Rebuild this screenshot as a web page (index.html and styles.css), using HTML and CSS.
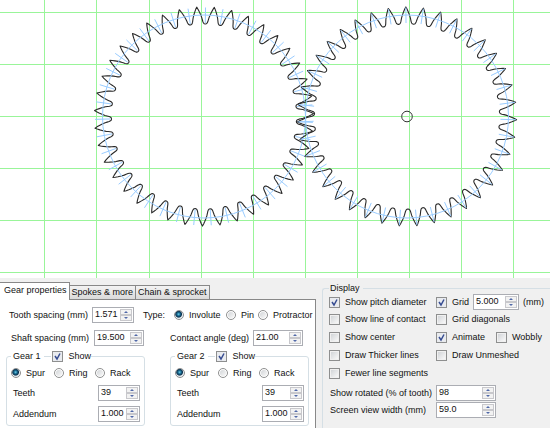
FILE: index.html
```html
<!DOCTYPE html>
<html lang="en">
<head>
<meta charset="utf-8">
<title>Gear properties</title>
<link rel="stylesheet" href="styles.css">
</head>
<body>
<svg class="canvas" id="canvas" viewBox="0 0 550 278" role="img" aria-label="Two meshing gears">
  <path class="grid" d="M44.500 0V278M96.500 0V278M149.500 0V278M201.500 0V278M253.500 0V278M305.500 0V278M357.500 0V278M409.500 0V278M461.500 0V278M513.500 0V278M0 12.500H550M0 64.500H550M0 116.500H550M0 168.500H550M0 220.500H550M0 272.500H550"/>
  <g id="gears"></g>
  <circle class="hub" cx="407" cy="116.500" r="5.300"/>
</svg>

<main class="panels">
  <section class="left">
    <div class="tabs" role="tablist">
      <button class="tab active" role="tab" aria-selected="true">Gear properties</button>
      <button class="tab" role="tab">Spokes &amp; more</button>
      <button class="tab" role="tab">Chain &amp; sprocket</button>
    </div>
    <div class="page" role="tabpanel">
      <div class="row type-row">
        <label for="tooth">Tooth spacing (mm)</label>
        <div class="spin w42"><input id="tooth" type="text" value="1.571"><span class="arrows"><button aria-label="Increase"></button><button aria-label="Decrease"></button></span></div>
        <span>Type:</span>
        <label class="opt"><input type="radio" name="type" checked>Involute</label>
        <label class="opt"><input type="radio" name="type">Pin</label>
        <label class="opt"><input type="radio" name="type">Protractor</label>
      </div>
      <div class="row shaft-row">
        <label for="shaft">Shaft spacing (mm)</label>
        <div class="spin"><input id="shaft" type="text" value="19.500"><span class="arrows"><button aria-label="Increase"></button><button aria-label="Decrease"></button></span></div>
        <label for="angle">Contact angle (deg)</label>
        <div class="spin"><input id="angle" type="text" value="21.00"><span class="arrows"><button aria-label="Increase"></button><button aria-label="Decrease"></button></span></div>
      </div>
      <div class="gear-groups">
        <fieldset class="group gear">
          <legend><span>Gear 1</span><i class="rule"></i><label class="opt"><input type="checkbox" checked>Show</label></legend>
          <div class="kinds">
            <label class="opt"><input type="radio" name="kind1" checked>Spur</label>
            <label class="opt"><input type="radio" name="kind1">Ring</label>
            <label class="opt"><input type="radio" name="kind1">Rack</label>
          </div>
          <div class="field"><label for="teeth1">Teeth</label><div class="spin w42"><input id="teeth1" type="text" value="39"><span class="arrows"><button aria-label="Increase"></button><button aria-label="Decrease"></button></span></div></div>
          <div class="field"><label for="add1">Addendum</label><div class="spin w42"><input id="add1" type="text" value="1.000"><span class="arrows"><button aria-label="Increase"></button><button aria-label="Decrease"></button></span></div></div>
        </fieldset>
        <fieldset class="group gear">
          <legend><span>Gear 2</span><i class="rule"></i><label class="opt"><input type="checkbox" checked>Show</label></legend>
          <div class="kinds">
            <label class="opt"><input type="radio" name="kind2" checked>Spur</label>
            <label class="opt"><input type="radio" name="kind2">Ring</label>
            <label class="opt"><input type="radio" name="kind2">Rack</label>
          </div>
          <div class="field"><label for="teeth2">Teeth</label><div class="spin w42"><input id="teeth2" type="text" value="39"><span class="arrows"><button aria-label="Increase"></button><button aria-label="Decrease"></button></span></div></div>
          <div class="field"><label for="add2">Addendum</label><div class="spin w42"><input id="add2" type="text" value="1.000"><span class="arrows"><button aria-label="Increase"></button><button aria-label="Decrease"></button></span></div></div>
        </fieldset>
      </div>
    </div>
  </section>

  <fieldset class="group display">
    <legend>Display</legend>
    <div class="checks">
      <label class="opt"><input type="checkbox" checked>Show pitch diameter</label>
      <div class="pair">
        <label class="opt"><input type="checkbox" checked>Grid</label>
        <div class="spin w46"><input type="text" value="5.000" aria-label="Grid size"><span class="arrows"><button aria-label="Increase"></button><button aria-label="Decrease"></button></span></div>
        <span>(mm)</span>
      </div>
      <label class="opt"><input type="checkbox">Show line of contact</label>
      <label class="opt"><input type="checkbox">Grid diagonals</label>
      <label class="opt"><input type="checkbox">Show center</label>
      <div class="pair wide">
        <label class="opt"><input type="checkbox" checked>Animate</label>
        <label class="opt"><input type="checkbox">Wobbly</label>
      </div>
      <label class="opt"><input type="checkbox">Draw Thicker lines</label>
      <label class="opt"><input type="checkbox">Draw Unmeshed</label>
      <label class="opt"><input type="checkbox">Fewer line segments</label>
    </div>
    <div class="values">
      <label for="rotated">Show rotated (% of tooth)</label>
      <div class="spin w60"><input id="rotated" type="text" value="98"><span class="arrows"><button aria-label="Increase"></button><button aria-label="Decrease"></button></span></div>
      <label for="view">Screen view width (mm)</label>
      <div class="spin w60"><input id="view" type="text" value="59.0"><span class="arrows"><button aria-label="Increase"></button><button aria-label="Decrease"></button></span></div>
    </div>
  </fieldset>
</main>
<script src="gears.js"></script>
</body>
</html>
```
FILE: styles.css
```css
* { box-sizing: border-box; }
body {
  margin: 0;
  background: #f0f0f0;
  color: #111;
  font: 9px/12px "Liberation Sans", Arial, sans-serif;
  overflow: hidden;
}
input, button { font: inherit; color: inherit; margin: 0; padding: 0; }
label, span, legend { white-space: nowrap; }

.canvas { display: block; width: 100%; background: #fff; }
.grid { stroke: #99f599; fill: none; }
.pitch, .tick { stroke: #99ccff; fill: none; }
.tooth { stroke: #2a2a2a; stroke-width: 1.1; fill: none; stroke-linejoin: round; }
.hub { stroke: #333; fill: none; }

.panels { display: flex; gap: 6px; padding-top: 4px; }
.left { flex: 0 0 316px; }

.tabs { display: flex; align-items: flex-end; height: 17px; }
.tab {
  height: 14px;
  padding: 0 2px;
  line-height: 13px;
  border: 1px solid #888;
  border-left-width: 0;
  border-bottom: 0;
  background: linear-gradient(#f3f3f3, #dadada);
  white-space: nowrap;
}
.tab.active {
  height: 18px;
  padding: 0 2px 2px 4px;
  margin-bottom: -1px;
  background: #fff;
  z-index: 1;
}
.page {
  height: 131px;
  padding: 7px 0 0 6px;
  background: #fff;
  border: 1px solid #888;
  border-left: 0;
  border-bottom: 0;
}

.row { display: grid; align-items: center; height: 16px; }
.type-row { grid-template-columns: 83px 51px 31px 52px 32px auto; padding-left: 3px; margin-bottom: 7px; }
.shaft-row { grid-template-columns: 83px 76px 83px auto; padding-left: 5px; margin-bottom: 4px; }

.opt { display: flex; align-items: center; gap: 5px; }
.opt input {
  appearance: none;
  flex: none;
  width: 11px;
  height: 11px;
  border: 1px solid #8e8f8f;
  background: linear-gradient(135deg, #d2d5d8, #f8f8f8) content-box #f4f4f4;
  padding: 1px;
}
.opt input[type="radio"] { width: 10px; height: 10px; border-radius: 50%; }
.opt input[type="radio"]:checked {
  background: radial-gradient(circle at 45% 40%, #6fd0ee 0, #17698f 25%, #0d3350 45%, #e8eef2 60%);
}
.opt input[type="checkbox"]:checked {
  background: url("data:image/svg+xml,%3Csvg xmlns='http://www.w3.org/2000/svg' viewBox='0 0 9 9'%3E%3Cpath d='M2 4L4 7L7 1.500' fill='none' stroke='%23364c91' stroke-width='1.500'/%3E%3C/svg%3E") center / 9px 9px no-repeat #e9ebef;
}

.spin {
  display: flex;
  width: 50px;
  height: 16px;
  padding: 1px;
  background: #fff;
  border: 1px solid #abadb3;
}
.w42 { width: 42px; }
.w46 { width: 46px; }
.w60 { width: 60px; }
.spin input { flex: 1; min-width: 0; border: 0; background: none; height: 11px; line-height: 11px; outline: 0; padding-left: 1px; }
.arrows { display: flex; flex-direction: column; width: 12px; }
.arrows button {
  flex: 1;
  display: grid;
  place-items: center;
  border: 1px solid #c8c8cc;
  background: #f2f2f2;
}
.arrows button::before { content: ""; border: 2px solid transparent; border-top-width: 0; border-bottom-color: #5068a8; }
.arrows button:last-child::before { border-top: 2px solid #5068a8; border-bottom-width: 0; }

.group { margin: 0; padding: 0; border: 1px solid #d5dfe5; border-radius: 3px; min-width: 0; }
.gear-groups { display: flex; gap: 25px; }
.gear { width: 139px; height: 76px; padding: 0 4px; }
.gear legend { display: flex; align-items: center; width: 80px; height: 12px; padding: 0 0 0 2px; }
.rule { flex: 1; height: 1px; margin: 0 1px 0 3px; background: #d5dfe5; }
.kinds { display: grid; grid-template-columns: 43px 41px auto; height: 12px; margin: 5px 0 6px; }
.field { display: flex; align-items: center; justify-content: space-between; padding-left: 2px; height: 16px; margin-bottom: 5px; }

.display { flex: 1; height: 150px; border-right: 0; border-bottom: 0; border-radius: 3px 0 0 0; padding-left: 6px; }
.display legend { padding: 0 3px 0 1px; }
.checks { display: grid; grid-template-columns: 107px auto; grid-template-rows: 16px repeat(4, 18px); align-items: center; }
.pair { display: flex; align-items: center; gap: 4px; }
.wide { gap: 11px; }
.values { display: grid; grid-template-columns: 106px auto; row-gap: 1px; align-items: center; margin: 3px 0 0 1px; }
```
FILE: gears.js
```javascript
const NS = "http://www.w3.org/2000/svg";
const TEETH = 39;
const PITCH_RADIUS = 101.5;
// Half-tooth profile: radius and angle in degrees from the tooth tip.
const PROFILE = [
  [109.6, 0], [107.5, 0.6], [105, 1.2], [102, 1.9], [99, 2.5], [97, 2.8],
  [95, 3.1], [93.6, 3.45], [92.8, 3.9], [92.5, 4.615]
];

function point(gear, radius, degrees) {
  const a = degrees * Math.PI / 180;
  return (gear.x + radius * Math.cos(a)).toFixed(2) + " " + (gear.y + radius * Math.sin(a)).toFixed(2);
}

function add(name, className, attributes) {
  const node = document.createElementNS(NS, name);
  node.setAttribute("class", className);
  for (const key in attributes) node.setAttribute(key, attributes[key]);
  document.getElementById("gears").appendChild(node);
}

function drawGear(gear) {
  const outline = [];
  let ticks = "";
  const step = 360 / TEETH;
  for (let i = 0; i < TEETH; i++) {
    const tip = gear.tip + i * step;
    PROFILE.slice().reverse().forEach(p => outline.push(point(gear, p[0], tip - p[1])));
    PROFILE.slice(1).forEach(p => outline.push(point(gear, p[0], tip + p[1])));
    const t = tip + gear.tickOffset * step;
    ticks += "M" + point(gear, 93.5, t) + "L" + point(gear, 109, t);
  }
  add("path", "tooth", { d: "M" + outline.join("L") + "Z" });
  add("circle", "pitch", { cx: gear.x, cy: gear.y, r: PITCH_RADIUS });
  add("path", "tick", { d: ticks });
}

drawGear({ x: 204, y: 116.5, tip: 90.8, tickOffset: 0.5 });
drawGear({ x: 407, y: 116.5, tip: -90.6, tickOffset: 0 });
```
